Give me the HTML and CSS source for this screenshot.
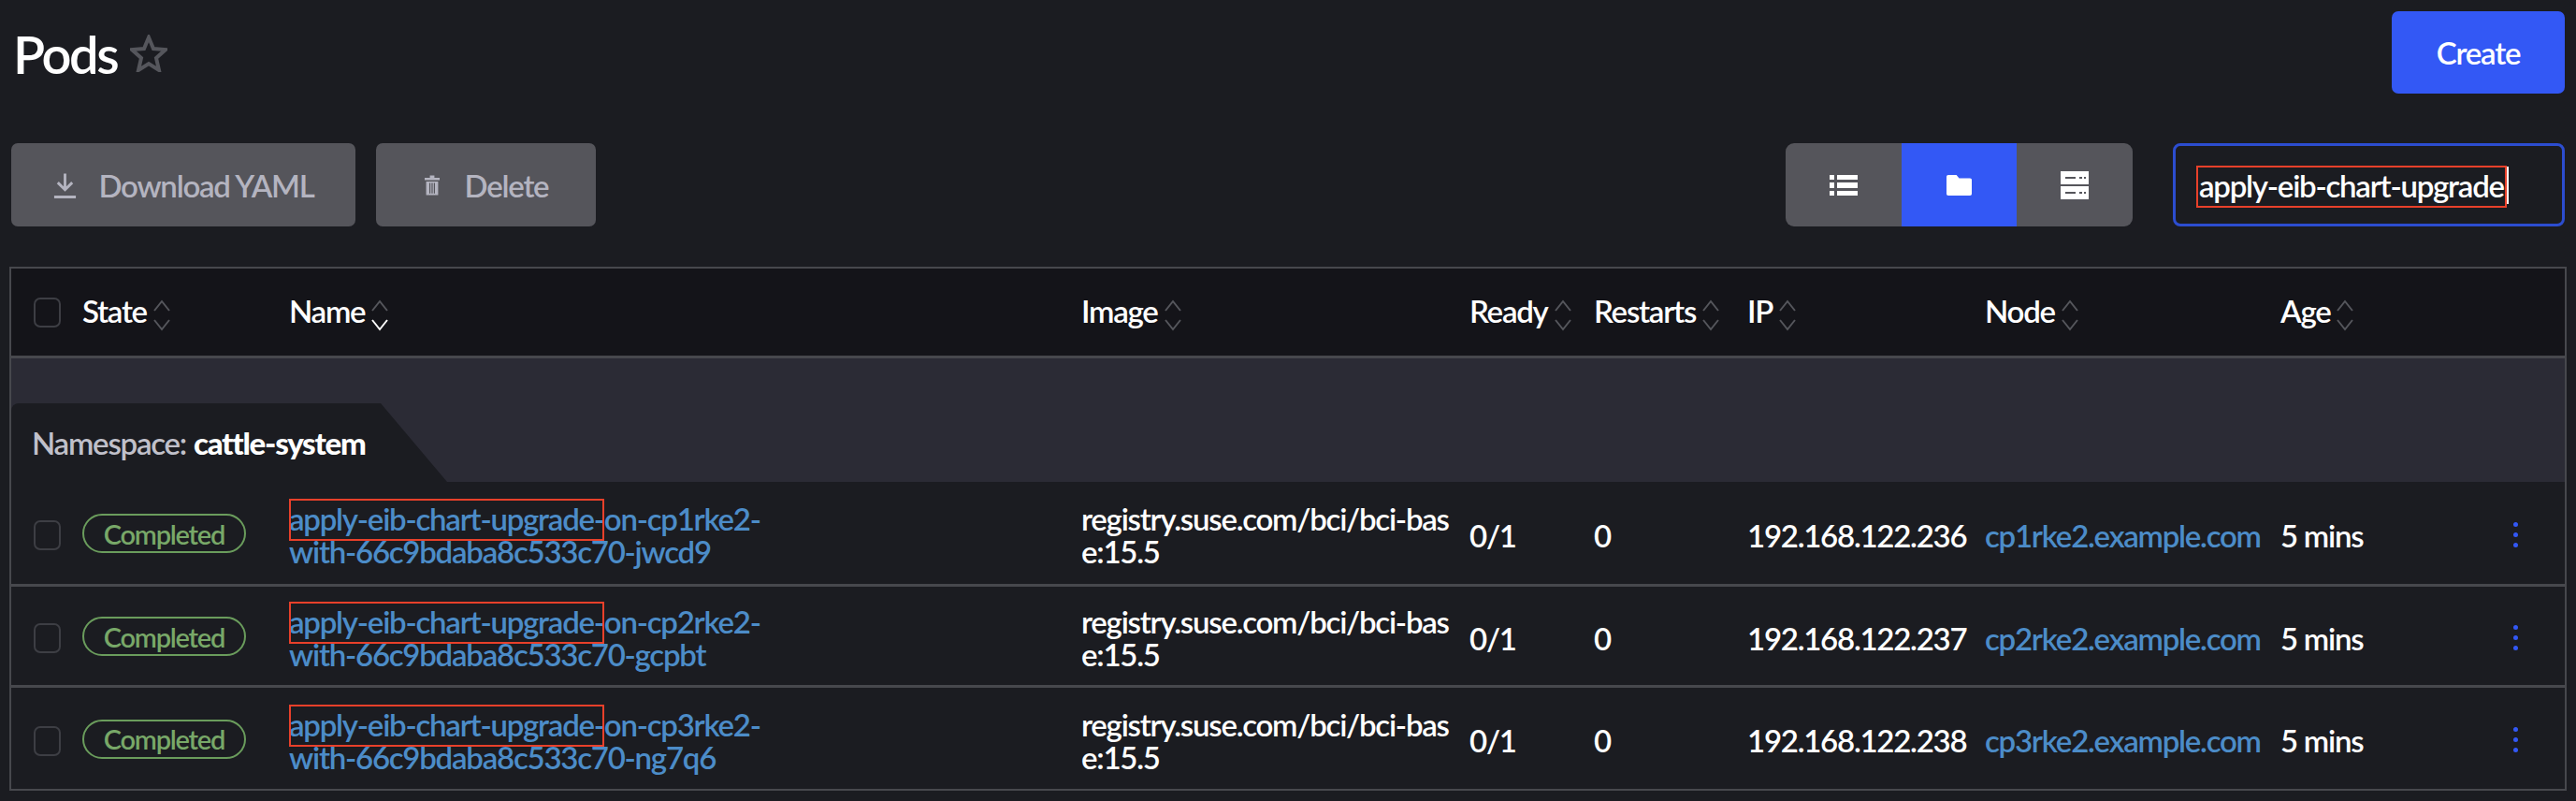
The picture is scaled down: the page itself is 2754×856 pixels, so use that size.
FILE: index.html
```html
<!DOCTYPE html>
<html lang="en">
    <head>
        <title>Pods</title>
        <meta charset="UTF-8">
        <meta name="viewport" content="width=device-width, initial-scale=1">
        <link rel="stylesheet" href="styles.css">
    </head>
    <body>
        <svg class="defs" width="0" height="0">
            <symbol id="sort" viewBox="0 0 20 36">
                <path class="sortUp" d="M2 13 L10 3 L18 13"/>
                <path class="sortDown" d="M2 23 L10 33 L18 23"/>
            </symbol>
        </svg>
        <div class="page">
            <header class="titleBar">
                <h1>Pods</h1>
                <svg class="star" viewBox="0 0 40 40"><path d="M20 3 L25 15 L38 16 L28 25 L31 38 L20 31 L9 38 L12 25 L2 16 L15 15 Z"/></svg>
                <button class="btn primary">Create</button>
            </header>
            <div class="toolbar">
                <button class="btn muted">
                    <svg class="btnIcon" viewBox="0 0 28 30"><path d="M14 2 V19 M6 12 L14 20 L22 12 M2 28 H26"/></svg>
                    Download YAML
                </button>
                <button class="btn muted">
                    <svg class="btnIcon trash" viewBox="0 0 22 30"><path class="solid" d="M1 5 H8 V2 H14 V5 H21 V8 H1 Z M3 10 H19 V28 H3 Z"/><path class="cut" d="M8 12 V26 M11 12 V26 M14 12 V26"/></svg>
                    Delete
                </button>
                <div class="toggle">
                    <span class="toggleItem">
                        <svg class="listIcon" viewBox="0 0 30 24" preserveAspectRatio="none"><path d="M0 1 H5 V6 H0 Z M0 9 H5 V15 H0 Z M0 18 H5 V23 H0 Z M8 1 H30 V6 H8 Z M8 9 H30 V15 H8 Z M8 18 H30 V23 H8 Z"/></svg>
                    </span>
                    <span class="toggleItem active">
                        <svg class="folderIcon" viewBox="0 0 28 26" preserveAspectRatio="none"><path d="M2 0 H11 L14 4 H26 Q28 4 28 6 V24 Q28 26 26 26 H2 Q0 26 0 24 V2 Q0 0 2 0 Z"/></svg>
                    </span>
                    <span class="toggleItem">
                        <svg viewBox="0 0 30 30"><path fill-rule="evenodd" d="M0 0 H30 V14 H0 Z M5 6 V8 H16 V6 Z M20 6 V8 H23 V6 Z M25 6 V8 H27 V6 Z M0 16 H30 V30 H0 Z M5 22 V24 H16 V22 Z M20 22 V24 H23 V22 Z M25 22 V24 H27 V22 Z"/></svg>
                    </span>
                </div>
                <div class="search">
                    <span class="mark searchMark">apply-eib-chart-upgrade</span>
                </div>
            </div>
            <table class="pods">
                <colgroup>
                    <col class="cCheck"><col class="cState"><col class="cName"><col class="cImage"><col class="cReady">
                    <col class="cRestarts"><col class="cIp"><col class="cNode"><col class="cAge"><col class="cAction">
                </colgroup>
                <thead>
                    <tr>
                        <th><i class="check"></i></th>
                        <th>State<svg class="sort"><use href="#sort"/></svg></th>
                        <th>Name<svg class="sort sorted"><use href="#sort"/></svg></th>
                        <th>Image<svg class="sort"><use href="#sort"/></svg></th>
                        <th>Ready<svg class="sort"><use href="#sort"/></svg></th>
                        <th>Restarts<svg class="sort"><use href="#sort"/></svg></th>
                        <th>IP<svg class="sort"><use href="#sort"/></svg></th>
                        <th>Node<svg class="sort"><use href="#sort"/></svg></th>
                        <th>Age<svg class="sort"><use href="#sort"/></svg></th>
                        <th></th>
                    </tr>
                </thead>
                <tbody>
                    <tr class="groupRow">
                        <td colspan="10">
                            <div class="groupTab">Namespace: <b>cattle-system</b></div>
                        </td>
                    </tr>
                    <tr class="podRow">
                        <td><i class="check"></i></td>
                        <td><span class="badge">Completed</span></td>
                        <td><a class="link"><span class="mark">apply-eib-chart-upgrade-</span>on-cp1rke2-<br>with-66c9bdaba8c533c70-jwcd9</a></td>
                        <td>registry.suse.com/bci/bci-bas<br>e:15.5</td>
                        <td>0/1</td>
                        <td>0</td>
                        <td>192.168.122.236</td>
                        <td><a class="link">cp1rke2.example.com</a></td>
                        <td>5 mins</td>
                        <td><span class="dots"><i></i><i></i><i></i></span></td>
                    </tr>
                    <tr class="podRow">
                        <td><i class="check"></i></td>
                        <td><span class="badge">Completed</span></td>
                        <td><a class="link"><span class="mark">apply-eib-chart-upgrade-</span>on-cp2rke2-<br>with-66c9bdaba8c533c70-gcpbt</a></td>
                        <td>registry.suse.com/bci/bci-bas<br>e:15.5</td>
                        <td>0/1</td>
                        <td>0</td>
                        <td>192.168.122.237</td>
                        <td><a class="link">cp2rke2.example.com</a></td>
                        <td>5 mins</td>
                        <td><span class="dots"><i></i><i></i><i></i></span></td>
                    </tr>
                    <tr class="podRow">
                        <td><i class="check"></i></td>
                        <td><span class="badge">Completed</span></td>
                        <td><a class="link"><span class="mark">apply-eib-chart-upgrade-</span>on-cp3rke2-<br>with-66c9bdaba8c533c70-ng7q6</a></td>
                        <td>registry.suse.com/bci/bci-bas<br>e:15.5</td>
                        <td>0/1</td>
                        <td>0</td>
                        <td>192.168.122.238</td>
                        <td><a class="link">cp3rke2.example.com</a></td>
                        <td>5 mins</td>
                        <td><span class="dots"><i></i><i></i><i></i></span></td>
                    </tr>
                </tbody>
            </table>
        </div>
    </body>
</html>
```
FILE: styles.css
```css
*{
    margin: 0;
    padding: 0;
    box-sizing: border-box;
}
body {
    background: #1b1c21;
    color: #fff;
    font-family: Lato, "Liberation Sans", sans-serif;
    font-size: 33px;
    font-weight: 600;
    letter-spacing: -1.25px;
}
.defs {
    position: absolute;
}
.page {
    padding: 12px 12px 0;
}
.titleBar {
    display: flex;
    align-items: center;
    height: 88px;
    margin-bottom: 53px;
}
.titleBar h1 {
    font-size: 56px;
    font-weight: 600;
    margin-left: 2px;
    margin-top: 2px;
    letter-spacing: -2.4px;
}
.star {
    width: 40px;
    height: 40px;
    margin-left: 14px;
    margin-top: 2px;
}
.star path {
    fill: none;
    stroke: #55565c;
    stroke-width: 4;
}
.btn {
    display: flex;
    align-items: center;
    justify-content: center;
    border: 0;
    border-radius: 7px;
    font: inherit;
    letter-spacing: inherit;
    color: #fff;
}
.primary {
    width: 185px;
    height: 88px;
    margin-left: auto;
    background: #3358f5;
}
.toolbar {
    display: flex;
    align-items: stretch;
    height: 89px;
    margin-bottom: 43px;
}
.muted {
    background: #55555b;
    color: #b4b4c0;
    gap: 22px;
    width: 368px;
    margin-right: 22px;
}
.muted:nth-child(2) {
    gap: 26px;
    width: 235px;
    margin-right: 0;
}
.btnIcon {
    width: 27px;
    height: 30px;
}
.btnIcon path {
    fill: none;
    stroke: #b4b4c0;
    stroke-width: 3;
}
.btnIcon .solid {
    fill: #b4b4c0;
    stroke: none;
}
.btnIcon .cut {
    stroke: #55555b;
    stroke-width: 1.5;
}
.trash {
    width: 18px;
    height: 24px;
}
.toggle {
    display: flex;
    width: 371px;
    margin-left: auto;
    border-radius: 9px;
    overflow: hidden;
    background: #55555b;
}
.toggleItem {
    flex: 124px 1 1;
    display: flex;
    align-items: center;
    justify-content: center;
}
.toggleItem svg {
    width: 30px;
    height: 30px;
    fill: #fff;
}
.toggleItem .listIcon {
    height: 24px;
}
.toggleItem .folderIcon {
    width: 27px;
    height: 22px;
}
.toggleItem.active {
    background: #3358f5;
}
.search {
    display: flex;
    align-items: center;
    width: 419px;
    margin-left: 43px;
    padding-left: 22px;
    border: 3px solid #2c4dd0;
    border-radius: 8px;
    background: #1b1c21;
}
.mark {
    position: relative;
}
.mark::after {
    content: "";
    position: absolute;
    left: 0;
    right: 0;
    top: -1px;
    bottom: -4px;
    border: 2px solid #e8402a;
}
.searchMark {
    padding: 0 3px;
    border-right: 2px solid #fff;
}
.pods {
    width: 2734px;
    margin-left: -2px;
    table-layout: fixed;
    border-collapse: separate;
    border-spacing: 0;
    border: 2px solid #47484d;
}
.cCheck { width: 76px; }
.cState { width: 221px; }
.cName { width: 847px; }
.cImage { width: 415px; }
.cReady { width: 133px; }
.cRestarts { width: 164px; }
.cIp { width: 254px; }
.cNode { width: 316px; }
.cAge { width: 212px; }
.cAction { width: 92px; }
.pods th {
    height: 96px;
    text-align: left;
    font-weight: 600;
    background: #141419;
    border-bottom: 3px solid #47484d;
}
.pods td {
    line-height: 35px;
    padding-top: 5px;
    vertical-align: middle;
    border-bottom: 3px solid #47484d;
}
.pods tr:last-child td {
    border-bottom: 0;
}
.podRow:nth-child(2) { height: 112px; }
.podRow:nth-child(3) { height: 108px; }
.podRow:nth-child(4) { height: 108px; }
.check {
    display: block;
    width: 29px;
    height: 32px;
    margin-left: 24px;
    border: 2px solid #3d3e44;
    border-radius: 7px;
}
.sort {
    --down: #55565c;
    width: 20px;
    height: 36px;
    margin-left: 6px;
    vertical-align: middle;
}
.sortUp, .sortDown {
    fill: none;
    stroke: #55565c;
    stroke-width: 2;
}
.sortDown {
    stroke: var(--down);
}
.sorted {
    --down: #fff;
}
.groupRow td {
    height: 132px;
    padding: 0;
    vertical-align: bottom;
    background: #2b2b35;
    border-bottom: 0;
}
.groupTab {
    display: flex;
    align-items: center;
    gap: 8px;
    width: 466px;
    height: 84px;
    padding-left: 22px;
    color: #c0c0ca;
    background: #1b1c21;
    border-radius: 8px 0 0 0;
    clip-path: polygon(0 0, 395px 0, 100% 100%, 0 100%);
}
.groupTab b {
    color: #fff;
}
.badge {
    display: inline-flex;
    align-items: center;
    justify-content: center;
    width: 175px;
    height: 42px;
    border: 2px solid #6a9c5c;
    border-radius: 21px;
    color: #78a868;
    font-size: 29px;
    margin-bottom: 4px;
}
.link {
    color: #4c8cc8;
}
.dots {
    display: flex;
    flex-direction: column;
    gap: 6px;
    width: 5px;
    margin-left: 37px;
    margin-bottom: 2px;
}
.dots i {
    width: 5px;
    height: 5px;
    border-radius: 50%;
    background: #3358f5;
}
```
